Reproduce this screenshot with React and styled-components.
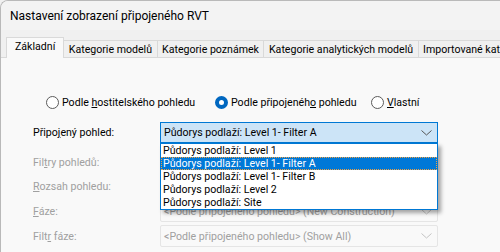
import styled, { createGlobalStyle } from 'styled-components';

const GlobalStyle = createGlobalStyle`
  html, body {
    margin: 0;
    padding: 0;
    background: #f0f0f0;
    overflow: hidden;
  }
  * { box-sizing: border-box; }
`;

const tabs = [
  { label: 'Základní', active: true },
  { label: 'Kategorie modelů' },
  { label: 'Kategorie poznámek' },
  { label: 'Kategorie analytických modelů' },
  { label: 'Importované kategorie' },
];

const options = [
  'Půdorys podlaží: Level 1',
  'Půdorys podlaží: Level 1- Filter A',
  'Půdorys podlaží: Level 1- Filter B',
  'Půdorys podlaží: Level 2',
  'Půdorys podlaží: Site',
];

const Chevron = ({ color }) => (
  <svg width="11" height="6" viewBox="0 0 11 6">
    <path d="M0.5 0.5 L5.5 5 L10.5 0.5" fill="none" stroke={color} strokeWidth="1" />
  </svg>
);

const Radio = ({ checked, width, children }) => (
  <RadioOption $width={width}>
    <RadioCircle $checked={checked} />
    <span>{children}</span>
  </RadioOption>
);

const App = () => {
  return (
    <>
      <GlobalStyle />
      <Window>
        <TitleBar>Nastavení zobrazení připojeného RVT</TitleBar>
        <TabStrip>
          {tabs.map((t) => (
            <Tab key={t.label} $active={t.active}>{t.label}</Tab>
          ))}
        </TabStrip>
        <Panel>
          <RadioRow>
            <Radio width={169}>Podle <u>h</u>ostitelského pohledu</Radio>
            <Radio width={156} checked>Podle připojenéh<u>o</u> pohledu</Radio>
            <Radio><u>V</u>lastní</Radio>
          </RadioRow>

          <Form>
            <Row $top={0} $height={21}>
              <Label>Připo<u>j</u>ený pohled:</Label>
              <ComboWrap>
                <Combo $open>
                  <span>Půdorys podlaží: Level 1- Filter A</span>
                  <Chevron color="#555" />
                </Combo>
                <DropList>
                  {options.map((o, i) => (
                    <DropItem key={o} $selected={i === 1}>{o}</DropItem>
                  ))}
                </DropList>
              </ComboWrap>
            </Row>
            <Row $top={9} $height={20}>
              <Label $disabled>Fil<u>t</u>ry pohledů:</Label>
            </Row>
            <Row $top={4} $height={20}>
              <Label $disabled><u>R</u>ozsah pohledu:</Label>
            </Row>
            <Row $top={5} $height={21}>
              <Label $disabled><u>F</u>áze:</Label>
              <Combo $disabled>
                <span>&lt;Podle připojeného pohledu&gt; (New Construction)</span>
                <Chevron color="#c4c4c4" />
              </Combo>
            </Row>
            <Row $top={3} $height={22}>
              <Label $disabled>Filt<u>r</u> fáze:</Label>
              <Combo $disabled>
                <span>&lt;Podle připojeného pohledu&gt; (Show All)</span>
                <Chevron color="#c4c4c4" />
              </Combo>
            </Row>
          </Form>
        </Panel>
      </Window>
    </>
  );
};

export default App;

const Window = styled.div`
  width: 500px;
  height: 252px;
  background: #f0f0f0;
  border-top: 1px solid #b9b9b9;
  border-left: 1px solid #b9b9b9;
  border-top-left-radius: 8px;
  overflow: hidden;
  font-family: Roboto, "Noto Sans", sans-serif;
  font-size: 10.6px;
  color: #000;
  display: flex;
  flex-direction: column;
`;

const TitleBar = styled.div`
  height: 29px;
  padding-left: 9px;
  display: flex;
  align-items: center;
  font-size: 12px;
  background: #f3f3f3;
`;

const TabStrip = styled.div`
  margin-top: 8px;
  padding-left: 6px;
  height: 20px;
  display: flex;
  align-items: flex-end;
  white-space: nowrap;
`;

const Tab = styled.div`
  height: ${(p) => (p.$active ? '21px' : '18px')};
  padding: 0 ${(p) => (p.$active ? '8px' : '4.5px')};
  padding-bottom: ${(p) => (p.$active ? '3px' : '0')};
  display: flex;
  align-items: center;
  background: ${(p) => (p.$active ? '#f9f9f9' : '#f0f0f0')};
  border: 1px solid #d9d9d9;
  border-bottom: ${(p) => (p.$active ? 'none' : '1px solid #d9d9d9')};
  margin-left: -1px;
  position: relative;
  z-index: ${(p) => (p.$active ? 1 : 0)};
`;

const Panel = styled.div`
  flex: 1;
  background: #f9f9f9;
  margin-top: -1px;
  border-top: 1px solid #d9d9d9;
  padding-top: 37px;
`;

const RadioRow = styled.div`
  display: flex;
  align-items: center;
  padding-left: 45px;
  height: 14px;
`;

const RadioOption = styled.label`
  display: flex;
  align-items: center;
  gap: 3px;
  width: ${(p) => (p.$width ? `${p.$width}px` : 'auto')};
  white-space: nowrap;
`;

const RadioCircle = styled.span`
  width: 13px;
  height: 13px;
  border-radius: 50%;
  flex: none;
  background: #fff;
  border: ${(p) => (p.$checked ? '4px solid #0067c0' : '1px solid #5b5b5b')};
`;

const Form = styled.div`
  margin-top: 13px;
  padding-left: 32px;
`;

const Row = styled.div`
  display: flex;
  align-items: center;
  height: ${(p) => p.$height}px;
  margin-top: ${(p) => p.$top}px;
`;

const Label = styled.div`
  width: 127px;
  color: ${(p) => (p.$disabled ? '#a0a0a0' : '#000')};
  white-space: nowrap;
`;

const ComboWrap = styled.div`
  position: relative;
  height: 100%;
`;

const Combo = styled.div`
  width: 278px;
  height: 100%;
  display: flex;
  align-items: center;
  justify-content: space-between;
  padding: 0 5px 0 3px;
  white-space: nowrap;
  background: ${(p) => (p.$open ? '#cce4f7' : '#f9f9f9')};
  border: 1px solid ${(p) => (p.$open ? '#0078d4' : '#e5e5e5')};
  color: ${(p) => (p.$disabled ? '#a0a0a0' : '#000')};
  border-radius: ${(p) => (p.$open ? '0' : '2px')};
`;

const DropList = styled.div`
  position: absolute;
  top: 21px;
  left: 0;
  width: 278px;
  background: #fff;
  border: 1px solid #0078d4;
  box-shadow: 3px 3px 4px rgba(0, 0, 0, 0.35);
  z-index: 5;
`;

const DropItem = styled.div`
  height: 13px;
  line-height: 13px;
  padding-left: 2px;
  white-space: nowrap;
  background: ${(p) => (p.$selected ? '#0078d7' : '#fff')};
  color: ${(p) => (p.$selected ? '#fff' : '#000')};
  outline: ${(p) => (p.$selected ? '1px dotted #f0a040' : 'none')};
  outline-offset: -1px;
`;
